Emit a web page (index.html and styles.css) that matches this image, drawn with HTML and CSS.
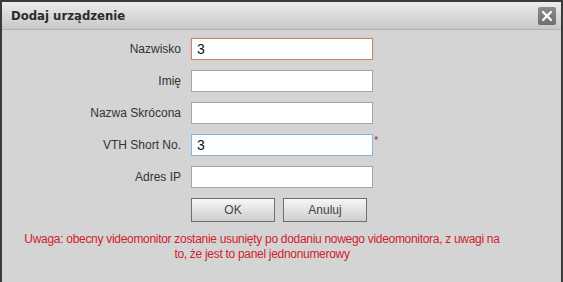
FILE: index.html
```html
<!DOCTYPE html>
<html lang="pl">
<head>
    <meta charset="UTF-8">
    <title>Dodaj urządzenie</title>
    <link rel="stylesheet" href="styles.css">
</head>
<body>
    <div class="dialog">
        <div class="title-bar">
            <span class="title">Dodaj urządzenie</span>
            <span class="close-btn">
                <svg width="12" height="12" viewBox="0 0 12 12"><path d="M2 2 L10 10 M10 2 L2 10" stroke="#fff" stroke-width="2.2" stroke-linecap="round"/></svg>
            </span>
        </div>
        <div class="content">
            <div class="form">
                <div class="row">
                    <label>Nazwisko</label>
                    <input type="text" class="field error" value="3">
                </div>
                <div class="row">
                    <label>Imię</label>
                    <input type="text" class="field">
                </div>
                <div class="row">
                    <label>Nazwa Skrócona</label>
                    <input type="text" class="field">
                </div>
                <div class="row">
                    <label>VTH Short No.</label>
                    <input type="text" class="field focused" value="3">
                    <span class="required">*</span>
                </div>
                <div class="row">
                    <label>Adres IP</label>
                    <input type="text" class="field">
                </div>
                <div class="row buttons">
                    <label></label>
                    <button class="btn">OK</button>
                    <button class="btn">Anuluj</button>
                </div>
            </div>
            <p class="warning">Uwaga: obecny videomonitor zostanie usunięty po dodaniu nowego videomonitora, z uwagi na to, że jest to panel jednonumerowy</p>
        </div>
    </div>
</body>
</html>
```

FILE: styles.css
```css
body {
    margin: 0; font-family: "Liberation Sans", Arial, sans-serif; font-size: 12px; background-color: #d4d4d4;
}
.dialog {
    width: 563px; height: 282px; box-sizing: border-box; border: 2px solid #3a3a3a; border-bottom: none; background-color: #d4d4d4;
}
.title-bar {
    height: 27px; display: flex; align-items: center; justify-content: space-between; padding: 0 5px 0 9px;
    background: linear-gradient(#ececec, #d9d9d9 50%, #c9c9c9); border-bottom: 1px solid #b0b0b0;
}
.title {
    font-family: "DejaVu Sans Condensed", "DejaVu Sans", sans-serif; font-weight: bold; font-size: 13px; color: #2b2b2b;
}
.close-btn {
    width: 18px; height: 18px; display: flex; align-items: center; justify-content: center;
    background: linear-gradient(#8c8c8c, #6e6e6e); border-radius: 2px;
}
.content {
    padding-top: 8px;
}
.form {
    display: flex; flex-direction: column; gap: 10px;
}
.row {
    display: flex; align-items: center; height: 22px;
}
.row label {
    width: 179px; text-align: right; padding-right: 10px; color: #333;
}
.field {
    width: 182px; height: 22px; box-sizing: border-box; margin: 0; border: 1px solid #a5a5a5; background: #fff;
    padding: 0 5px; font-family: "Liberation Sans", Arial, sans-serif; font-size: 14px; color: #111; outline: none;
}
.field.error {
    border-color: #c9826f; box-shadow: 0 0 2px #e8b9ad;
}
.field.focused {
    border-color: #86b6e0; background: #fbfeff;
}
.required {
    color: #d0203a; font-size: 11px; align-self: flex-start; margin-left: 1px;
}
.buttons {
    height: 24px; gap: 8px;
}
.buttons label {
    margin-right: -8px;
}
.btn {
    width: 84px; height: 24px; margin: 0; border: 1px solid #6f6f6f; background: linear-gradient(#f7f7f7, #dedede 60%, #cfcfcf);
    font-family: "Liberation Sans", Arial, sans-serif; font-size: 12px; color: #444; padding: 0;
}
.warning {
    width: 480px; margin: 10px 0 0 20px; text-align: center; color: #d2202c; line-height: 15px; letter-spacing: -0.3px;
}
```
